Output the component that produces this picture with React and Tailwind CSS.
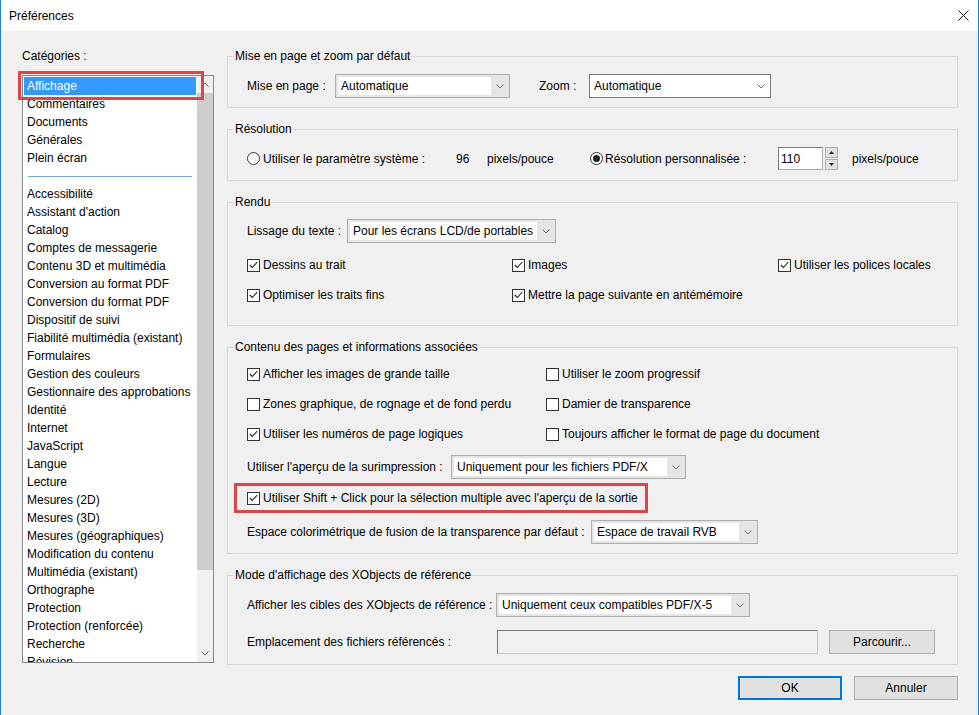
import React from 'react';

const categories = [
  'Affichage',
  'Commentaires',
  'Documents',
  'Générales',
  'Plein écran',
  null,
  'Accessibilité',
  "Assistant d'action",
  'Catalog',
  'Comptes de messagerie',
  'Contenu 3D et multimédia',
  'Conversion au format PDF',
  'Conversion du format PDF',
  'Dispositif de suivi',
  'Fiabilité multimédia (existant)',
  'Formulaires',
  'Gestion des couleurs',
  'Gestionnaire des approbations',
  'Identité',
  'Internet',
  'JavaScript',
  'Langue',
  'Lecture',
  'Mesures (2D)',
  'Mesures (3D)',
  'Mesures (géographiques)',
  'Modification du contenu',
  'Multimédia (existant)',
  'Orthographe',
  'Protection',
  'Protection (renforcée)',
  'Recherche',
  'Révision',
];

function Chevron({ up }) {
  return (
    <svg width="8" height="5" viewBox="0 0 8 5">
      <path
        d={up ? 'M0.5 4.5L4 1L7.5 4.5' : 'M0.5 0.5L4 4L7.5 0.5'}
        fill="none"
        stroke="#6a6a6a"
        strokeWidth="1"
      />
    </svg>
  );
}

function Combo({ value, className }) {
  return (
    <div className={`flex h-[24px] border border-[#adadad] bg-[#e5e5e5] ${className}`}>
      <div className="m-[2px] mr-0 flex flex-1 items-center bg-white pl-[3px] whitespace-nowrap">
        {value}
      </div>
      <div className="flex w-[18px] items-center justify-center">
        <Chevron />
      </div>
    </div>
  );
}

function Checkbox({ checked, label }) {
  return (
    <div className="flex items-center gap-[3px] whitespace-nowrap">
      <span className="flex h-[13px] w-[13px] shrink-0 items-center justify-center border border-[#333] bg-white">
        {checked && (
          <svg width="9" height="8" viewBox="0 0 9 8">
            <path d="M0.8 4L3.3 6.5L8.3 1" fill="none" stroke="#222" strokeWidth="1.1" />
          </svg>
        )}
      </span>
      <span>{label}</span>
    </div>
  );
}

function Radio({ checked }) {
  return (
    <span className="flex h-[13px] w-[13px] shrink-0 items-center justify-center rounded-full border border-[#333] bg-white">
      {checked && <span className="h-[7px] w-[7px] rounded-full bg-[#222]" />}
    </span>
  );
}

function Group({ title, className, children }) {
  return (
    <fieldset className={`border border-[#d9d9d9] ${className}`}>
      <legend className="ml-[6px] px-[1px] leading-[16px]">{title}</legend>
      {children}
    </fieldset>
  );
}

export default function App() {
  return (
    <div className="flex h-[715px] w-[979px] flex-col overflow-hidden border-x border-[#1883d7] bg-[#f0f0f0] text-[12px] text-black font-['Liberation_Sans',Arial,sans-serif]">
      {/* title bar */}
      <div className="flex h-[31px] shrink-0 items-center justify-between bg-white pl-[8px] pr-[9px]">
        <span>Préférences</span>
        <svg width="11" height="11" viewBox="0 0 11 11">
          <path d="M0.5 0.5L10.5 10.5M10.5 0.5L0.5 10.5" stroke="#111" strokeWidth="1" />
        </svg>
      </div>

      <div className="flex pl-[21px] pt-[17px]">
        {/* left: categories */}
        <div className="w-[192px]">
          <div className="leading-[16px]">Catégories :</div>
          <div className="relative mt-[11px] flex h-[588px] border border-[#828790] bg-white">
            <div className="flex-1 overflow-hidden p-[1px]">
              {categories.map((c, i) =>
                c === null ? (
                  <div key={i} className="flex h-[18px] items-center pl-[4px] pr-[4px]">
                    <div className="h-px w-full bg-[#7aa6d8]" />
                  </div>
                ) : (
                  <div
                    key={i}
                    className={`h-[18px] pl-[3px] leading-[18px] whitespace-nowrap ${
                      i === 0 ? 'bg-[#3399ff] text-white' : ''
                    }`}
                  >
                    {c}
                  </div>
                )
              )}
            </div>
            <div className="flex w-[16px] flex-col bg-[#f0f0f0]">
              <div className="flex h-[17px] items-center justify-center">
                <Chevron up />
              </div>
              <div className="h-[477px] bg-[#cdcdcd]" />
              <div className="flex-1" />
              <div className="flex h-[17px] items-center justify-center">
                <Chevron />
              </div>
            </div>
            <div className="absolute left-[-5px] top-[-5px] h-[29px] w-[186px] border-[3px] border-[#d9474a]" />
          </div>
        </div>

        {/* right: settings */}
        <div className="ml-[13px] w-[731px]">
          <Group title="Mise en page et zoom par défaut" className="">
            <div className="flex items-center px-[19px] pb-[9px] pt-[10px]">
              <span className="w-[88px]">Mise en page :</span>
              <Combo value="Automatique" className="w-[175px]" />
              <span className="ml-[29px] w-[50px]">Zoom :</span>
              <div className="flex h-[24px] w-[182px] items-center border border-[#7a7a7a] bg-white pl-[4px]">
                <span className="flex-1">Automatique</span>
                <span className="flex w-[18px] justify-center">
                  <Chevron />
                </span>
              </div>
            </div>
          </Group>

          <Group title="Résolution" className="mt-[13px]">
            <div className="flex h-[43px] items-center px-[19px] pb-[10px] pt-[10px]">
              <div className="flex w-[209px] items-center gap-[3px] whitespace-nowrap">
                <Radio />
                <span>Utiliser le paramètre système :</span>
              </div>
              <span className="w-[31px]">96</span>
              <span className="w-[103px]">pixels/pouce</span>
              <div className="flex w-[188px] items-center gap-[2px] whitespace-nowrap">
                <Radio checked />
                <span>Résolution personnalisée :</span>
              </div>
              <div className="flex h-[23px] w-[45px] items-center border border-[#adadad] border-l-[#7a7a7a] border-t-[#7a7a7a] bg-white pl-[2px]">
                110
              </div>
              <div className="ml-[2px] flex h-[23px] w-[13px] flex-col gap-[1px]">
                <div className="flex flex-1 items-center justify-center border border-[#adadad] bg-[#e1e1e1]">
                  <svg width="5" height="3" viewBox="0 0 5 3">
                    <path d="M0 3L2.5 0L5 3Z" fill="#222" />
                  </svg>
                </div>
                <div className="flex flex-1 items-center justify-center border border-[#adadad] bg-[#e1e1e1]">
                  <svg width="5" height="3" viewBox="0 0 5 3">
                    <path d="M0 0L2.5 3L5 0Z" fill="#222" />
                  </svg>
                </div>
              </div>
              <span className="ml-[14px]">pixels/pouce</span>
            </div>
          </Group>

          <Group title="Rendu" className="mt-[13px]">
            <div className="px-[19px] pb-[22px] pt-[9px]">
              <div className="flex items-center">
                <span className="w-[100px]">Lissage du texte :</span>
                <Combo value="Pour les écrans LCD/de portables" className="w-[209px]" />
              </div>
              <div className="mt-[14px] flex h-[16px] items-center">
                <div className="w-[265px]">
                  <Checkbox checked label="Dessins au trait" />
                </div>
                <div className="w-[266px]">
                  <Checkbox checked label="Images" />
                </div>
                <Checkbox checked label="Utiliser les polices locales" />
              </div>
              <div className="mt-[14px] flex h-[16px] items-center">
                <div className="w-[265px]">
                  <Checkbox checked label="Optimiser les traits fins" />
                </div>
                <Checkbox checked label="Mettre la page suivante en antémémoire" />
              </div>
            </div>
          </Group>

          <Group title="Contenu des pages et informations associées" className="mt-[13px]">
            <div className="px-[19px] pb-[9px] pt-[11px]">
              <div className="flex h-[16px] items-center">
                <div className="w-[299px]">
                  <Checkbox checked label="Afficher les images de grande taille" />
                </div>
                <Checkbox label="Utiliser le zoom progressif" />
              </div>
              <div className="mt-[14px] flex h-[16px] items-center">
                <div className="w-[299px]">
                  <Checkbox label="Zones graphique, de rognage et de fond perdu" />
                </div>
                <Checkbox label="Damier de transparence" />
              </div>
              <div className="mt-[14px] flex h-[16px] items-center">
                <div className="w-[299px]">
                  <Checkbox checked label="Utiliser les numéros de page logiques" />
                </div>
                <Checkbox label="Toujours afficher le format de page du document" />
              </div>
              <div className="mt-[13px] flex items-center">
                <span className="w-[204px] whitespace-nowrap">Utiliser l'aperçu de la surimpression :</span>
                <Combo value="Uniquement pour les fichiers PDF/X" className="w-[235px]" />
              </div>
              <div className="ml-[-13px] mt-[4px] flex h-[30px] w-[414px] items-center border-[3px] border-[#d9474a] pl-[10px]">
                <Checkbox checked label="Utiliser Shift + Click pour la sélection multiple avec l'aperçu de la sortie" />
              </div>
              <div className="mt-[7px] flex items-center">
                <span className="w-[344px] whitespace-nowrap">
                  Espace colorimétrique de fusion de la transparence par défaut :
                </span>
                <Combo value="Espace de travail RVB" className="w-[167px]" />
              </div>
            </div>
          </Group>

          <Group title="Mode d'affichage des XObjects de référence" className="mt-[13px]">
            <div className="px-[19px] pb-[10px] pt-[10px]">
              <div className="flex items-center">
                <span className="w-[249px] whitespace-nowrap">Afficher les cibles des XObjects de référence :</span>
                <Combo value="Uniquement ceux compatibles PDF/X-5" className="w-[254px]" />
              </div>
              <div className="mt-[13px] flex h-[24px] items-center">
                <span className="w-[250px] whitespace-nowrap">Emplacement des fichiers référencés :</span>
                <div className="h-[24px] w-[321px] border border-[#c8c8c8] border-l-[#7a7a7a] border-t-[#7a7a7a] bg-[#f0f0f0]" />
                <button className="ml-[11px] h-[24px] w-[106px] border border-[#adadad] bg-[#e1e1e1]">
                  Parcourir...
                </button>
              </div>
            </div>
          </Group>

          <div className="mt-[11px] flex justify-end gap-[12px]">
            <button className="h-[24px] w-[104px] border-2 border-[#0078d7] bg-[#e1e1e1]">OK</button>
            <button className="h-[24px] w-[104px] border border-[#adadad] bg-[#e1e1e1]">Annuler</button>
          </div>
        </div>
      </div>
    </div>
  );
}
